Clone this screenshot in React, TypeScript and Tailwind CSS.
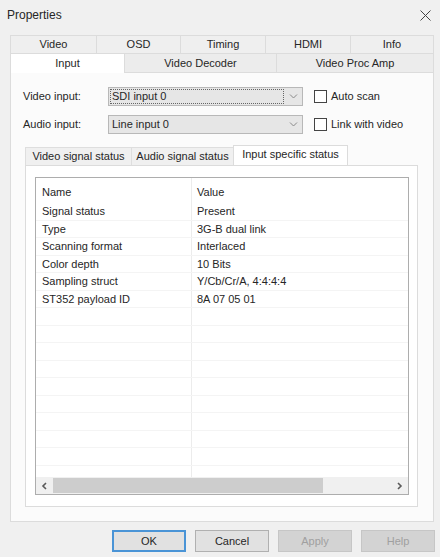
import React from "react";

const topTabs = [
  { label: "Video", w: "w-[86px]" },
  { label: "OSD", w: "w-[84px]" },
  { label: "Timing", w: "w-[85px]" },
  { label: "HDMI", w: "w-[85px]" },
  { label: "Info", w: "w-[84px]" },
];

const rows: [string, string][] = [
  ["Signal status", "Present"],
  ["Type", "3G-B dual link"],
  ["Scanning format", "Interlaced"],
  ["Color depth", "10 Bits"],
  ["Sampling struct", "Y/Cb/Cr/A, 4:4:4:4"],
  ["ST352 payload ID", "8A 07 05 01"],
];

const EMPTY_ROWS = 10;

function Chevron({ dir }: { dir: "down" | "left" | "right" }) {
  const d =
    dir === "down" ? "M1 1.5 L4.5 5 L8 1.5" : dir === "left" ? "M5 1 L2 4 L5 7" : "M2 1 L5 4 L2 7";
  const size = dir === "down" ? { w: 9, h: 7 } : { w: 7, h: 8 };
  return (
    <svg width={size.w} height={size.h} viewBox={`0 0 ${size.w} ${size.h}`} fill="none">
      <path d={d} stroke={dir === "down" ? "#8a8a8a" : "#5a5a5a"} strokeWidth={dir === "down" ? 1 : 1.6} />
    </svg>
  );
}

function Combo({ value, focused }: { value: string; focused?: boolean }) {
  return (
    <div className="flex h-[19px] w-[195px] items-center border border-[#b8b8b8] bg-[#e6e6e6]">
      <div className="flex h-full flex-1 items-center p-[1px]">
        <div
          className={
            focused
              ? "flex h-full w-[174px] items-center border border-dotted border-[#666] pl-[1px]"
              : "flex h-full w-[174px] items-center pl-[2px]"
          }
        >
          {value}
        </div>
      </div>
      <div className="flex w-[18px] items-center justify-center">
        <Chevron dir="down" />
      </div>
    </div>
  );
}

function Check({ label }: { label: string }) {
  return (
    <label className="ml-[11px] flex items-center">
      <span className="h-[13px] w-[13px] border border-[#444] bg-white" />
      <span className="ml-[4px]">{label}</span>
    </label>
  );
}

function Button({ label, variant }: { label: string; variant: "default" | "normal" | "disabled" }) {
  const cls =
    variant === "default"
      ? "border-2 border-[#4a94d6] bg-[#e1e1e1] text-[#262626]"
      : variant === "normal"
        ? "border border-[#b0b0b0] bg-[#e1e1e1] text-[#262626]"
        : "border border-[#c6c6c6] bg-[#d3d3d3] text-[#a0a0a0]";
  return (
    <button type="button" className={`flex h-[22px] w-[74px] items-center justify-center ${cls}`}>
      {label}
    </button>
  );
}

export default function App() {
  return (
    <div className="flex h-[557px] w-[440px] flex-col bg-[#f0f0f0] font-['Liberation_Sans',Arial,sans-serif] text-[11px] text-[#262626]">
      {/* title bar */}
      <div className="flex h-[30px] items-center justify-between pl-[7px] pr-[9px]">
        <span className="text-[12px]">Properties</span>
        <svg width="11" height="11" viewBox="0 0 11 11">
          <path d="M0.5 0.5 L10.5 10.5 M10.5 0.5 L0.5 10.5" stroke="#444" strokeWidth="1" />
        </svg>
      </div>

      {/* property sheet */}
      <div className="ml-[10px] mt-[5px] w-[424px]">
        <div className="flex h-[18px]">
          {topTabs.map((t, i) => (
            <div
              key={t.label}
              className={`${t.w} flex items-center justify-center border-l border-t border-[#dcdcdc] bg-[#efefef] ${
                i === topTabs.length - 1 ? "border-r" : ""
              }`}
            >
              {t.label}
            </div>
          ))}
        </div>
        <div className="flex h-[20px]">
          <div className="flex w-[114px] items-center justify-center border-l border-t border-[#dcdcdc] bg-white">
            Input
          </div>
          <div className="flex w-[152px] items-center justify-center border-b border-l border-t border-[#dcdcdc] bg-[#ececec]">
            Video Decoder
          </div>
          <div className="flex flex-1 items-center justify-center border-x border-b border-t border-[#dcdcdc] bg-[#ececec]">
            Video Proc Amp
          </div>
        </div>

        <div className="flex h-[449px] flex-col border-x border-b border-[#dcdcdc] bg-[#fbfbfb] pl-[12px] pt-[14px]">
          <div className="flex h-[19px] items-center">
            <span className="w-[85px]">Video input:</span>
            <Combo value="SDI input 0" focused />
            <Check label="Auto scan" />
          </div>
          <div className="mt-[9px] flex h-[19px] items-center">
            <span className="w-[85px]">Audio input:</span>
            <Combo value="Line input 0" />
            <Check label="Link with video" />
          </div>

          {/* status tabs */}
          <div className="ml-[2px] mt-[11px] flex h-[20px] items-end">
            <div className="flex h-[18px] w-[106px] items-center justify-center border-l border-t border-[#dedede] bg-[#f0f0f0]">
              Video signal status
            </div>
            <div className="flex h-[18px] w-[102px] items-center justify-center border-l border-t border-[#dedede] bg-[#f0f0f0]">
              Audio signal status
            </div>
            <div className="flex h-[20px] w-[115px] items-center justify-center border-x border-t border-[#dcdcdc] bg-white pb-[2px]">
              Input specific status
            </div>
          </div>

          <div className="ml-[2px] flex h-[342px] w-[393px] flex-col border border-[#dcdcdc] bg-white pl-[9px] pt-[11px]">
            <div className="flex h-[318px] w-[374px] flex-col border border-[#adadad] bg-white">
              <div className="flex h-[25px] shrink-0">
                <div className="flex w-[156px] items-center border-r border-[#ececec] pl-[6px] pt-[4px]">Name</div>
                <div className="flex flex-1 items-center pl-[5px] pt-[4px]">Value</div>
              </div>
              <div className="flex-1 overflow-hidden">
                {rows.map(([name, value]) => (
                  <div key={name} className="flex h-[17.5px] border-b border-[#f4f4f4]">
                    <div className="flex w-[156px] items-center border-r border-[#ececec] pl-[6px]">{name}</div>
                    <div className="flex flex-1 items-center pl-[5px]">{value}</div>
                  </div>
                ))}
                {Array.from({ length: EMPTY_ROWS }, (_, i) => (
                  <div key={i} className="flex h-[17.5px] border-b border-[#f4f4f4]">
                    <div className="w-[156px] border-r border-[#ececec]" />
                  </div>
                ))}
              </div>
              <div className="flex h-[17px] shrink-0 items-center bg-[#f0f0f0]">
                <div className="flex w-[17px] items-center justify-center">
                  <Chevron dir="left" />
                </div>
                <div className="h-[15px] w-[270px] bg-[#cdcdcd]" />
                <div className="flex-1" />
                <div className="flex w-[17px] items-center justify-center">
                  <Chevron dir="right" />
                </div>
              </div>
            </div>
          </div>
        </div>
      </div>

      {/* dialog buttons */}
      <div className="mr-[5px] mt-[8px] flex justify-end gap-[9px]">
        <Button label="OK" variant="default" />
        <Button label="Cancel" variant="normal" />
        <Button label="Apply" variant="disabled" />
        <Button label="Help" variant="disabled" />
      </div>
    </div>
  );
}
